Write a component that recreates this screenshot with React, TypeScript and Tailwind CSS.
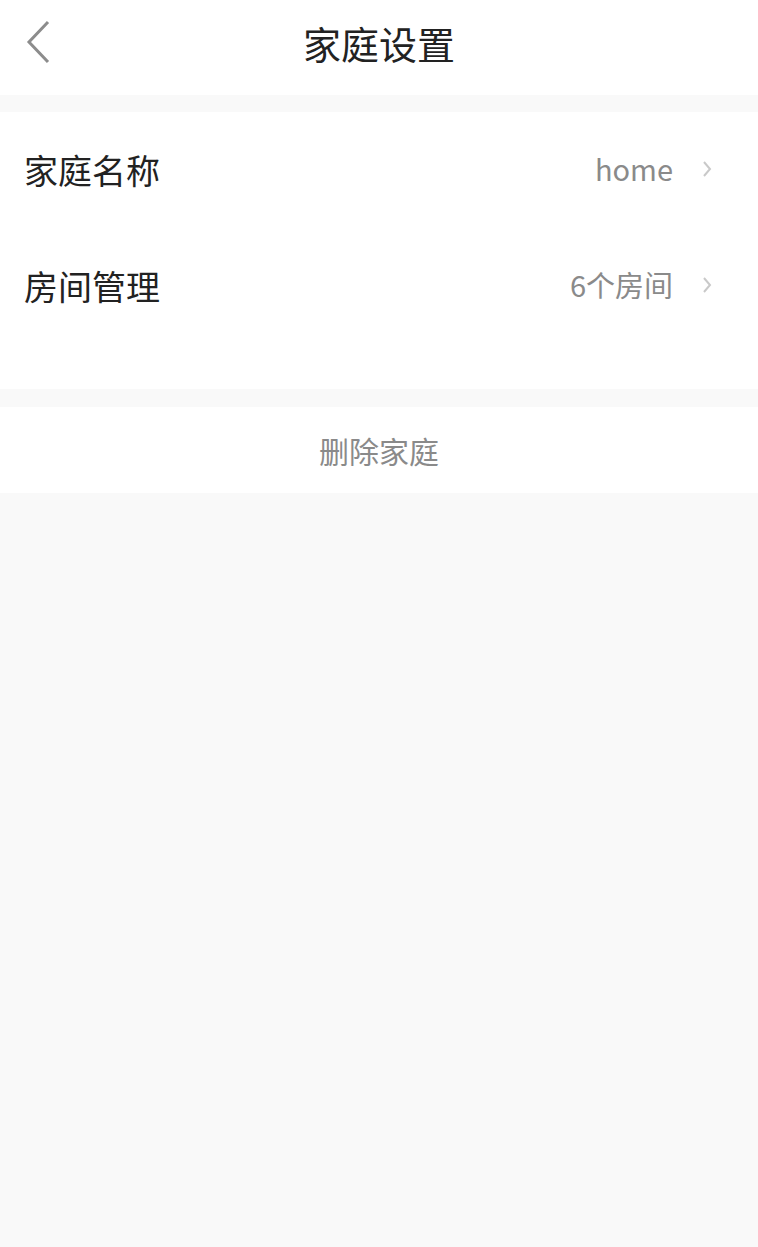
const font = { fontFamily: '"Noto Sans CJK SC", "Noto Sans", sans-serif' };

function Chevron() {
  return (
    <svg width="12" height="18" viewBox="0 0 12 18" className="ml-7 shrink-0">
      <path d="M3 2 L9 9 L3 16" fill="none" stroke="#c9c9c9" strokeWidth="2" />
    </svg>
  );
}

function Row({ label, value, h }: { label: string; value: string; h: string }) {
  return (
    <div className={`flex items-center justify-between pl-6 pr-[45px] ${h}`}>
      <span className="text-[34px] text-[#222]">{label}</span>
      <div className="flex items-center">
        <span className="text-[29px] text-[#8a8a8a]">{value}</span>
        <Chevron />
      </div>
    </div>
  );
}

export default function App() {
  return (
    <div className="flex min-h-[1247px] w-full flex-col bg-[#f9f9f9]" style={font}>
      <div className="relative flex h-[95px] items-center justify-center bg-white pb-[10px]">
        <svg width="30" height="44" viewBox="0 0 30 44" className="absolute left-[24px] top-[20px]">
          <path d="M24 2 L5 22 L24 42" fill="none" stroke="#8c8c8c" strokeWidth="3" />
        </svg>
        <span className="text-[38px] text-[#222]">家庭设置</span>
      </div>
      <div className="mt-[17px] flex flex-col bg-white pb-[45px]">
        <Row label="家庭名称" value="home" h="h-[114px]" />
        <Row label="房间管理" value="6个房间" h="h-[118px]" />
      </div>
      <div className="mt-[18px] flex h-[86px] items-center justify-center bg-white">
        <span className="text-[30px] text-[#8a8a8a]">删除家庭</span>
      </div>
    </div>
  );
}
